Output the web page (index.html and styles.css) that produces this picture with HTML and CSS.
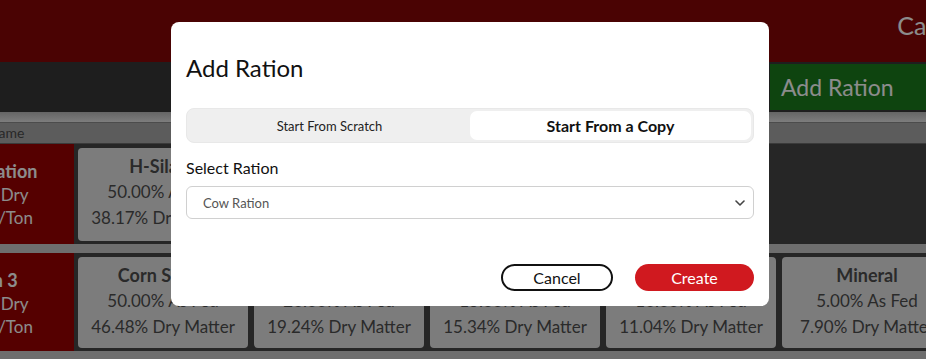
FILE: index.html
```html
<!DOCTYPE html>
<html lang="en">
<head>
    <meta charset="UTF-8">
    <meta name="viewport" content="width=device-width, initial-scale=1.0">
    <title>Rations</title>
    <link rel="stylesheet" href="styles.css">
</head>
<body>
    <div class="app">
        <div class="topbar">
            <span class="app-title">Cattle Rations</span>
        </div>
        <div class="toolbar">
            <button class="add-button">Add Ration</button>
        </div>
        <div class="strip"></div>
        <div class="content">
            <div class="header-row">Name</div>
            <div class="ration-row">
                <div class="ration-cell">
                    <div class="ration-name">Heifer Ration</div>
                    <div>42.10% Dry</div>
                    <div>$118.40/Ton</div>
                </div>
                <div class="feed-card">
                    <div class="feed-name">H-Silage</div>
                    <div>50.00% As Fed</div>
                    <div>38.17% Dry Matter</div>
                </div>
            </div>
            <div class="row-gap"></div>
            <div class="ration-row">
                <div class="ration-cell">
                    <div class="ration-name">Ration 3</div>
                    <div>40.66% Dry</div>
                    <div>$126.70/Ton</div>
                </div>
                <div class="feed-card">
                    <div class="feed-name">Corn Silage</div>
                    <div>50.00% As Fed</div>
                    <div>46.48% Dry Matter</div>
                </div>
                <div class="feed-card">
                    <div class="feed-name">Haylage</div>
                    <div>20.00% As Fed</div>
                    <div>19.24% Dry Matter</div>
                </div>
                <div class="feed-card">
                    <div class="feed-name">Corn</div>
                    <div>15.00% As Fed</div>
                    <div>15.34% Dry Matter</div>
                </div>
                <div class="feed-card">
                    <div class="feed-name">Soybean Meal</div>
                    <div>10.00% As Fed</div>
                    <div>11.04% Dry Matter</div>
                </div>
                <div class="feed-card">
                    <div class="feed-name">Mineral</div>
                    <div>5.00% As Fed</div>
                    <div>7.90% Dry Matter</div>
                </div>
            </div>
            <div class="row-gap"></div>
        </div>
    </div>

    <div class="overlay">
        <div class="modal">
            <h2>Add Ration</h2>
            <div class="segmented">
                <button class="segment">Start From Scratch</button>
                <button class="segment active">Start From a Copy</button>
            </div>
            <label class="field-label" for="rationSelect">Select Ration</label>
            <div class="select-wrap">
                <select id="rationSelect">
                    <option>Cow Ration</option>
                    <option>Heifer Ration</option>
                    <option>Ration 3</option>
                </select>
                <svg class="chevron" width="10" height="6" viewBox="0 0 10 6">
                    <path d="M1 1l4 4 4-4" fill="none" stroke="#444" stroke-width="1.6" stroke-linecap="round" stroke-linejoin="round"/>
                </svg>
            </div>
            <div class="modal-actions">
                <button class="btn-cancel">Cancel</button>
                <button class="btn-create">Create</button>
            </div>
        </div>
    </div>
</body>
</html>
```

FILE: styles.css
```css
body {
    margin: 0;
    padding: 0;
    font-family: Lato, "Open Sans", sans-serif;
    background: #c8c8c8;
    overflow: hidden;
    height: 359px;
}

.app {
    width: 926px;
}

.topbar {
    height: 62px;
    background: #870707;
    display: flex;
    justify-content: flex-end;
    align-items: flex-start;
    overflow: hidden;
}

.app-title {
    color: #fff;
    font-size: 25px;
    margin-top: 10px;
    margin-right: -125px;
    white-space: nowrap;
}

.toolbar {
    height: 50px;
    background: #373737;
    display: flex;
    justify-content: flex-end;
    align-items: center;
}

.add-button {
    width: 156px;
    height: 46px;
    border: none;
    background: #1a7c1d;
    color: #fff;
    font-family: inherit;
    font-size: 23px;
    text-align: left;
    padding-left: 11px;
}

.strip {
    height: 10px;
    background: linear-gradient(#b8b8b8, #e4e4e4);
}

.content {
    margin-left: -106px;
}

.header-row {
    height: 20px;
    line-height: 20px;
    background: #a8a8a8;
    border-top: 1px solid #8a8a8a;
    border-bottom: 1px solid #6a6a6a;
    padding-left: 94px;
    font-size: 14px;
    color: #4a4a4a;
}

.ration-row {
    display: flex;
    gap: 6px;
    height: 100px;
    background: #454545;
}

.ration-row + .row-gap + .ration-row {
    height: 98px;
}

.row-gap {
    height: 9px;
    background: #c8c8c8;
}

.ration-cell {
    width: 180px;
    flex-shrink: 0;
    background: #9c0000;
    color: #fff;
    text-align: center;
    padding-top: 16px;
    font-size: 17px;
    line-height: 23px;
    margin-right: -2px;
    box-sizing: border-box;
}

.ration-name {
    font-weight: 700;
    font-size: 18px;
}

.feed-card {
    width: 170px;
    flex-shrink: 0;
    margin: 4px 0 3px;
    padding-top: 5px;
    box-sizing: border-box;
    background: #e2e2e2;
    border-radius: 4px;
    color: #4e4e4e;
    text-align: center;
    font-size: 17px;
    line-height: 26px;
    white-space: nowrap;
    overflow: hidden;
}

.feed-name {
    font-weight: 700;
    font-size: 18px;
}

/* modal */
.overlay {
    position: fixed;
    inset: 0;
    background: rgba(0, 0, 0, 0.45);
    padding: 22px 0 0 171px;
}

.modal {
    width: 598px;
    height: 284px;
    box-sizing: border-box;
    background: #fff;
    border-radius: 8px;
    padding: 30px 15px 15px;
    display: flex;
    flex-direction: column;
}

.modal h2 {
    margin: 0;
    font-size: 24px;
    line-height: 32px;
    font-weight: 400;
    color: #111;
}

.segmented {
    margin-top: 24px;
    height: 35px;
    box-sizing: border-box;
    display: flex;
    padding: 2px;
    background: #efefef;
    border: 1px solid #e8e8e8;
    border-radius: 8px;
}

.segment {
    flex: 1;
    border: none;
    background: transparent;
    border-radius: 7px;
    font-family: inherit;
    font-size: 13px;
    color: #222;
}

.segment.active {
    background: #fff;
    font-weight: 700;
    font-size: 16px;
    color: #111;
}

.field-label {
    margin-top: 15px;
    font-size: 16px;
    line-height: 20px;
    color: #111;
}

.select-wrap {
    position: relative;
    margin-top: 8px;
}

.select-wrap select {
    width: 100%;
    height: 33px;
    appearance: none;
    border: 1px solid #d0d0d0;
    border-radius: 6px;
    background: #fff;
    padding: 0 16px;
    font-family: inherit;
    font-size: 13px;
    color: #555;
}

.chevron {
    position: absolute;
    right: 9px;
    top: 14px;
}

.modal-actions {
    margin-top: auto;
    display: flex;
    justify-content: flex-end;
    gap: 22px;
}

.btn-cancel,
.btn-create {
    height: 27px;
    border-radius: 14px;
    font-family: inherit;
    font-size: 16px;
    cursor: pointer;
}

.btn-cancel {
    width: 112px;
    background: #fff;
    border: 2px solid #111;
    color: #111;
}

.btn-create {
    width: 119px;
    background: #d0191f;
    border: none;
    color: #fff;
}
```
